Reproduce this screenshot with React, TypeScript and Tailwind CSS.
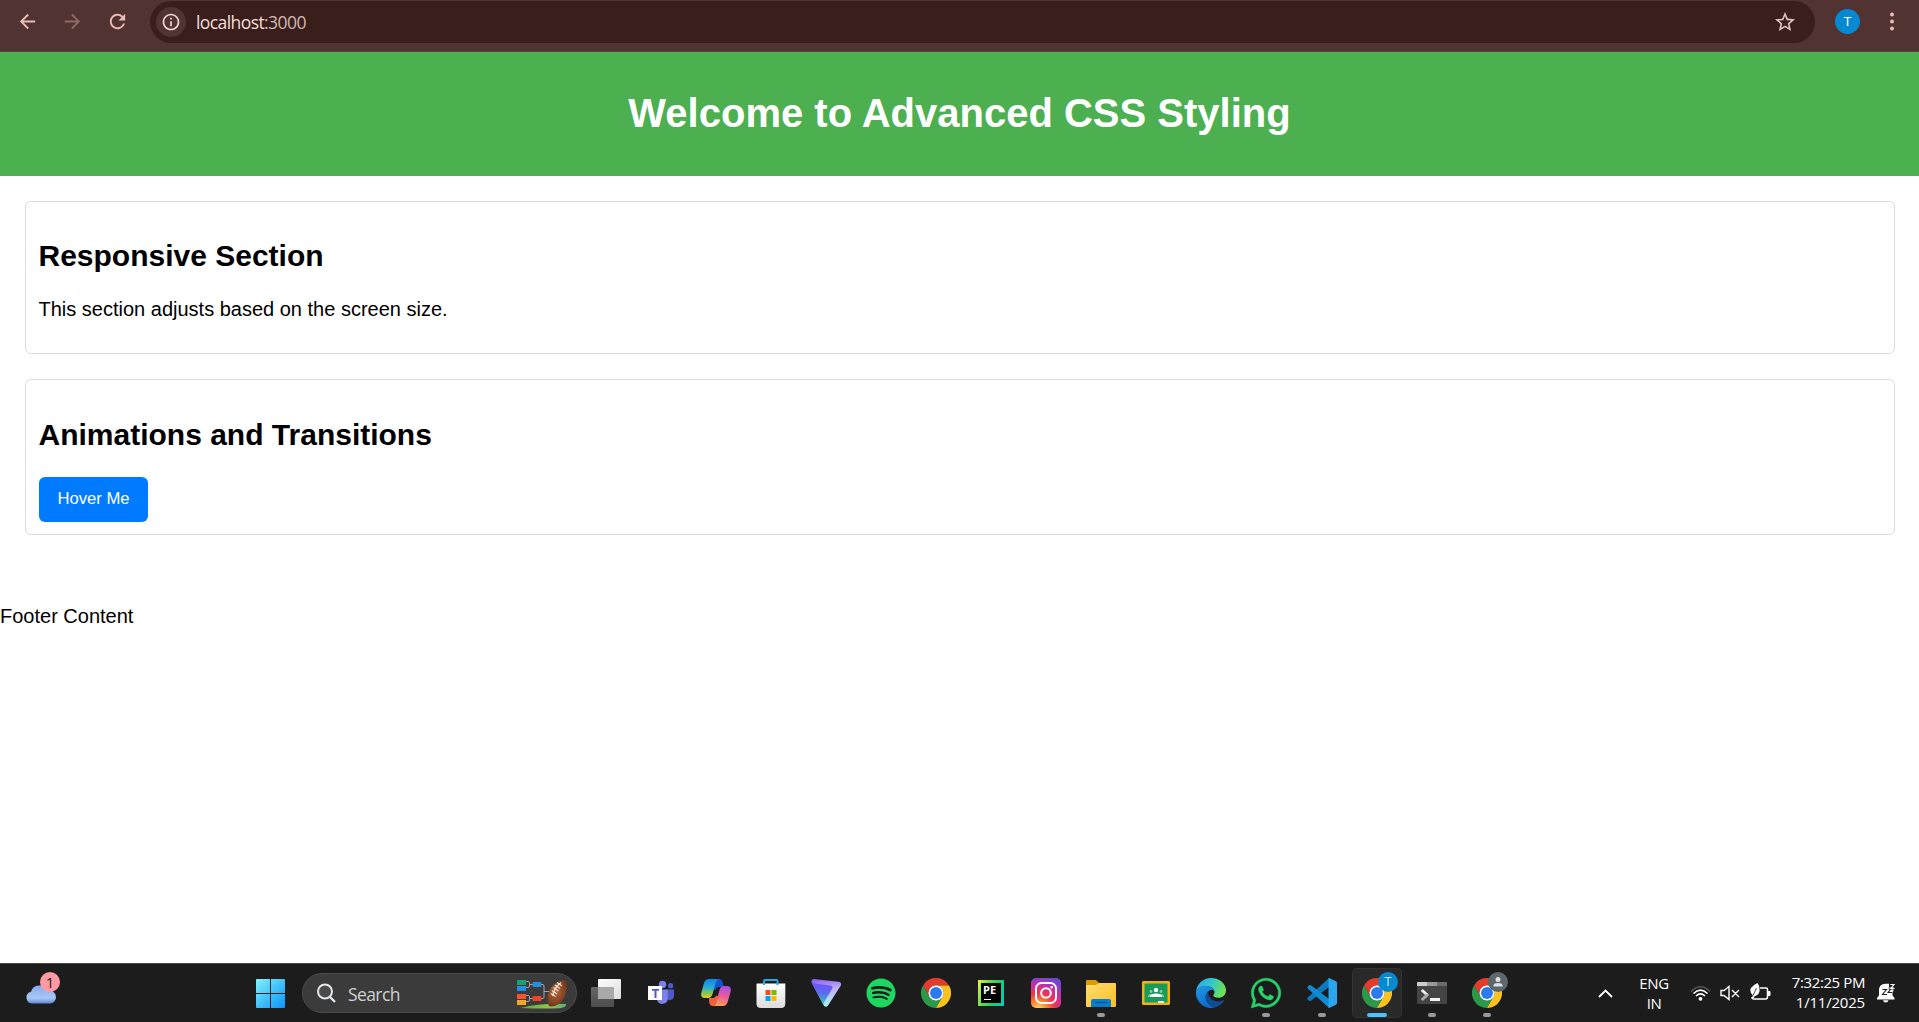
import React from "react";
import { MdArrowBack, MdArrowForward, MdRefresh, MdInfoOutline, MdStarBorder } from "react-icons/md";
import { FaSpotify, FaWhatsapp } from "react-icons/fa6";

function ChromeLogo() {
  return (
    <svg width="30" height="30" viewBox="0 0 48 48">
      <circle cx="24" cy="24" r="12" fill="#fff" />
      <path d="M3.2 12A24 24 0 0 1 44.8 12H24A12 12 0 0 0 13.6 30Z" fill="#e33b2e" />
      <path d="M3.2 12L13.6 30A12 12 0 0 0 34.4 30L24 48A24 24 0 0 1 3.2 12Z" fill="#2a9a48" />
      <path d="M44.8 12H24A12 12 0 0 1 34.4 30L24 48A24 24 0 0 0 44.8 12Z" fill="#fcc31e" />
      <circle cx="24" cy="24" r="12" fill="#fff" />
      <circle cx="24" cy="24" r="9.6" fill="#2b7bef" />
    </svg>
  );
}

function WeatherIcon() {
  return (
    <svg width="31" height="20" viewBox="0 0 31 20">
      <defs>
        <linearGradient id="cloud" x1="0" y1="0" x2="0" y2="1">
          <stop offset="0" stopColor="#88a9ee" />
          <stop offset="0.7" stopColor="#a9c8f8" />
          <stop offset="1" stopColor="#5f86d3" />
        </linearGradient>
      </defs>
      <path d="M6 19.5A6 6 0 0 1 5 7.7A8.5 8.5 0 0 1 21 6.5A7 7 0 0 1 30 13A6.3 6.3 0 0 1 24 19.5Z" fill="url(#cloud)" />
      <path d="M7 8.3C11 7 14 8.5 16 11C18 8 20 7 23 7.2" fill="none" stroke="#9cbaf3" strokeWidth="1.4" />
    </svg>
  );
}

function WindowsLogo() {
  return (
    <svg width="29" height="29" viewBox="0 0 29 29">
      <defs>
        <linearGradient id="win" gradientUnits="userSpaceOnUse" x1="0" y1="0" x2="29" y2="29">
          <stop offset="0" stopColor="#82f3ff" />
          <stop offset="0.5" stopColor="#43c3f9" />
          <stop offset="1" stopColor="#0a93fb" />
        </linearGradient>
      </defs>
      <path d="M1 0H14V14H0V1Q0 0 1 0ZM15 0H28Q29 0 29 1V14H15ZM0 15H14V29H1Q0 29 0 28ZM15 15H29V28Q29 29 28 29H15Z" fill="url(#win)" />
    </svg>
  );
}

function FootballArt() {
  return (
    <svg width="50" height="30" viewBox="0 0 50 30">
      <defs>
        <radialGradient id="ball" cx="0.4" cy="0.4" r="0.65">
          <stop offset="0" stopColor="#b66c3b" />
          <stop offset="1" stopColor="#6d3419" />
        </radialGradient>
        <linearGradient id="grass" x1="0" x2="1">
          <stop offset="0" stopColor="#57a33c" />
          <stop offset="0.6" stopColor="#8fc747" />
          <stop offset="1" stopColor="#5cb176" />
        </linearGradient>
      </defs>
      <path d="M3 29Q24 24 49 25Q50 28 43 29.3Q24 30 3 29Z" fill="url(#grass)" />
      <g fill="none" stroke="#a79fa9" strokeWidth="1">
        <path d="M9 2.5H11.5Q12.5 2.5 12.5 4V7Q12.5 8.5 11 8.5H9M12.5 5.5H16" />
        <path d="M9 16.5H11.5Q12.5 16.5 12.5 18V21Q12.5 22.5 11 22.5H9M12.5 19.5H16" />
        <path d="M24 5.5H26Q27 5.5 27 7V18Q27 19.5 26 19.5H24M27 12.5H32" />
      </g>
      <rect y="1" width="9" height="5" fill="#17a371" />
      <rect y="7" width="9" height="5" fill="#228fe2" />
      <rect y="15" width="9" height="5" fill="#f4552e" />
      <rect y="21" width="9" height="5" fill="#f0a824" />
      <rect x="15.5" y="3" width="9" height="5" rx="1" fill="#228fe2" />
      <rect x="15.5" y="17" width="9" height="5" rx="1" fill="#f04427" />
      <path d="M48.5 1.5C52 8 49 20 42 25C38 27.5 33.5 28 32 27C29 22 30 12 37 5.5C41 2 46 .5 48.5 1.5Z" fill="url(#ball)" />
      <path d="M44 3.5Q37 9 35.5 17" fill="none" stroke="#f3e5dc" strokeWidth="1.2" />
      <path d="M40 3.5L45 7M38 6L43 9.5M36.5 8.5L41.5 12M35 11.5L40 15M33.8 14.5L38.5 17.5" stroke="#f3e5dc" strokeWidth="1.1" />
    </svg>
  );
}

function TaskView() {
  return (
    <svg width="30" height="30" viewBox="0 0 30 30">
      <defs>
        <linearGradient id="tv1" x1="0" y1="0" x2="1" y2="1">
          <stop offset="0" stopColor="#fff" />
          <stop offset="1" stopColor="#dcdcdc" />
        </linearGradient>
        <linearGradient id="tv2" x1="0" y1="0" x2="0" y2="1">
          <stop offset="0" stopColor="#666" />
          <stop offset="1" stopColor="#4c4c4c" />
        </linearGradient>
      </defs>
      <rect x="0" y="9" width="23" height="20" rx="1" fill="url(#tv2)" />
      <rect x="7" y="1" width="23" height="20" rx="1" fill="url(#tv1)" />
      <path d="M7 9H22Q23 9 23 10V21H8Q7 21 7 20Z" fill="#a9a9a9" />
    </svg>
  );
}

function Teams() {
  return (
    <svg width="30" height="30" viewBox="0 0 30 30">
      <circle cx="16.5" cy="6.5" r="3.7" fill="#7b83eb" />
      <circle cx="24.6" cy="7.7" r="2.6" fill="#5059c9" />
      <path d="M20 11.5H28V18.5A4.5 4.5 0 0 1 20 20.5Z" fill="#5059c9" />
      <path d="M11 11.5H21.7V20.5A5.4 5.4 0 0 1 11 21.5Z" fill="#7b83eb" />
      <rect x="2" y="8" width="14" height="14" fill="#fff" />
      <path d="M6 11H13V12.7H10.5V20H8.5V12.7H6Z" fill="#5059c9" />
    </svg>
  );
}

function Copilot() {
  return (
    <svg width="30" height="30" viewBox="0 0 30 30">
      <defs>
        <linearGradient id="cp1" x1="0" y1="0" x2="0" y2="1">
          <stop offset="0" stopColor="#0d86e8" />
          <stop offset="0.4" stopColor="#23a9da" />
          <stop offset="0.7" stopColor="#6fc665" />
          <stop offset="1" stopColor="#eccb19" />
        </linearGradient>
        <linearGradient id="cp2" x1="0.6" y1="0" x2="0.4" y2="1">
          <stop offset="0" stopColor="#a94de8" />
          <stop offset="0.5" stopColor="#ec5c9b" />
          <stop offset="1" stopColor="#ff9e52" />
        </linearGradient>
      </defs>
      <path d="M14 1H18.5Q20.5 1 21.5 4L23 9H18Q15.5 9 14.5 12L11 10Z" fill="#1553ce" />
      <path d="M8 20H12Q14 20 15 17.5L17.5 19L14.5 26Q13.7 28 12 28H11Q9 28 8.3 25Z" fill="#f4603c" />
      <path d="M8 1H18Q16 1 15 4L11.5 16Q10.3 20 7 20H4Q-1 20 .5 14L3 5Q4.3 1 8 1Z" fill="url(#cp1)" />
      <path d="M23 8H26Q31 8 29.5 14L27 23Q25.7 28 22 28H12Q14 28 15 25L18.5 12Q19.6 8 23 8Z" fill="url(#cp2)" />
    </svg>
  );
}

function Store() {
  return (
    <svg width="30" height="30" viewBox="0 0 30 30">
      <defs>
        <linearGradient id="st" x1="0" y1="0" x2="0" y2="1">
          <stop offset="0" stopColor="#fff" />
          <stop offset="1" stopColor="#dcdcdc" />
        </linearGradient>
      </defs>
      <path d="M1 5.5H29.3V25.500Q29.3 30 25 30H5Q.5 30 .5 25.500V6Z" fill="url(#st)" />
      <path d="M8 7V3Q8 2 9 2H20.500Q21.500 2 21.500 3V7" fill="none" stroke="#25a7e3" strokeWidth="2" />
      <rect x="9.5" y="12" width="5" height="5" fill="#f25022" />
      <rect x="15.5" y="12" width="5" height="5" fill="#7fba00" />
      <rect x="9.5" y="18" width="5" height="5" fill="#00a4ef" />
      <rect x="15.5" y="18" width="5" height="5" fill="#ffb900" />
    </svg>
  );
}

function ProtonVpn() {
  return (
    <svg width="30" height="30" viewBox="0 0 30 30">
      <defs>
        <linearGradient id="pv1" x1="0.6" y1="0" x2="0.5" y2="1">
          <stop offset="0" stopColor="#7450fa" />
          <stop offset="0.5" stopColor="#5b6bf0" />
          <stop offset="1" stopColor="#27dcae" />
        </linearGradient>
        <linearGradient id="pv2" x1="0.4" y1="0" x2="0.6" y2="1">
          <stop offset="0" stopColor="#8d67fb" />
          <stop offset="0.4" stopColor="#c1adf8" />
          <stop offset="1" stopColor="#a8f7ef" />
        </linearGradient>
      </defs>
      <path d="M2.5 1L27.5 3.8Q31.3 4.5 29.5 8L17 27.5Q15 30 12.8 27.5L1 5Q-.5 1.5 2.5 1Z" fill="url(#pv2)" />
      <path d="M1 3Q2 5.5 5 5.8L19.500 7.5Q22.500 8.300 21 11L12.800 24.500Q12 26.500 12.800 27.700L.7 5Q.2 4 1 3Z" fill="url(#pv1)" />
    </svg>
  );
}

function PyCharmEdu() {
  return (
    <div className="flex h-[26px] w-[26px] items-center justify-center bg-[linear-gradient(110deg,#e9f542_0%,#5fdc48_35%,#16cf6d_65%,#13c3c9_100%)]">
      <div className="relative h-[20px] w-[20px] bg-black">
        <span className="absolute top-[2px] left-[2px] font-['Open_Sans',sans-serif] text-[11px] leading-[10px] font-bold text-white">PE</span>
        <span className="absolute bottom-[3px] left-[3px] h-px w-[7px] bg-white" />
      </div>
    </div>
  );
}

function Instagram() {
  return (
    <svg width="30" height="30" viewBox="0 0 30 30">
      <defs>
        <radialGradient id="ig" cx="0.25" cy="1.05" r="1.1">
          <stop offset="0" stopColor="#ffdc70" />
          <stop offset="0.25" stopColor="#fb8b32" />
          <stop offset="0.5" stopColor="#ee3550" />
          <stop offset="0.75" stopColor="#c72fa4" />
          <stop offset="1" stopColor="#7147cf" />
        </radialGradient>
      </defs>
      <rect width="30" height="30" rx="5" fill="url(#ig)" />
      <rect x="5" y="5" width="20" height="20" rx="5.5" fill="none" stroke="#fff" strokeWidth="2" />
      <circle cx="15" cy="15" r="4.8" fill="none" stroke="#fff" strokeWidth="2" />
      <circle cx="20.7" cy="9.3" r="1.3" fill="#fff" />
    </svg>
  );
}

function Explorer() {
  return (
    <svg width="30" height="30" viewBox="0 0 30 30">
      <defs>
        <linearGradient id="fo" x1="0" y1="0" x2="1" y2="1">
          <stop offset="0" stopColor="#ffdf72" />
          <stop offset="1" stopColor="#fbbd21" />
        </linearGradient>
      </defs>
      <path d="M0 3Q0 2 1 2H10L13 5H20V12H0Z" fill="#dd9a04" />
      <path d="M0 7H10L13 5H29Q30 5 30 6V28Q30 29 29 29H1Q0 29 0 28Z" fill="url(#fo)" />
      <path d="M5 29V23Q5 21 7 21H23Q25 21 25 23V29Z" fill="#087ccc" />
      <path d="M8.5 24.5H21.5" stroke="#034f91" strokeWidth="1" />
    </svg>
  );
}

function Classroom() {
  return (
    <svg width="30" height="30" viewBox="0 0 30 30">
      <rect x="1" y="3" width="28" height="24" rx="1.5" fill="#f1b30c" />
      <rect x="3.5" y="5.5" width="23" height="19" fill="#189a58" />
      <circle cx="15" cy="12" r="2.2" fill="#fff" />
      <circle cx="10" cy="13.5" r="1.4" fill="#8bcba8" />
      <circle cx="20" cy="13.5" r="1.4" fill="#8bcba8" />
      <path d="M6.8 19Q7 16 10 16H20Q23 16 23.2 19Z" fill="#8bcba8" />
      <path d="M9 19Q9.500 15.700 15 15.500Q20.500 15.700 21 19Z" fill="#fff" />
      <rect x="17" y="23" width="6" height="1.8" fill="#fff" />
    </svg>
  );
}

function Edge() {
  return (
    <svg width="30" height="30" viewBox="0 0 30 30">
      <defs>
        <linearGradient id="ed1" x1="0" y1="0.2" x2="1" y2="0.5">
          <stop offset="0" stopColor="#2ea5e6" />
          <stop offset="0.5" stopColor="#32c9c9" />
          <stop offset="1" stopColor="#72e24c" />
        </linearGradient>
        <linearGradient id="ed2" x1="0.2" y1="0" x2="0.6" y2="1">
          <stop offset="0" stopColor="#2196e0" />
          <stop offset="1" stopColor="#0b66d0" />
        </linearGradient>
      </defs>
      <path d="M0 14A15 15 0 0 1 15 0C24 0 30 6 30 12.5C30 17 26.5 19.8 22.5 19.8C19 19.8 17.3 18.7 17.3 17.6C17.3 16.8 18.5 16.3 18.5 14C18.5 11 15 8 10 8C5 8 1 10.5 0 14Z" fill="url(#ed1)" />
      <path d="M0 14C1 10 5 7.8 9.5 7.8C15 7.8 18.5 11 18.5 14C18 12 15.5 11.5 13.5 12.5C9 15 8.5 21 12.5 25.5C14.5 28 17 29.5 19.5 29.3A15 15 0 0 1 0 14Z" fill="url(#ed2)" />
      <path d="M12.2 13.4C8.5 16 8.7 21 12.5 25.5C14.5 28.2 17 29.5 19.5 29.3C23.5 28 26.5 25.5 28 22.8C28.2 22 27.7 21.8 27 22.2C23 24.3 17.5 23.7 14.2 20C12.3 17.7 12 15.5 12.2 13.4Z" fill="#0e4c94" />
    </svg>
  );
}

function VsCode() {
  return (
    <svg width="30" height="30" viewBox="0 0 30 30">
      <path d="M22 0L.8 19.5Q-.2 20.5 .8 21.5L2.3 22.8Q3 23.3 4 22.8L22 9Z" fill="#0b79bd" />
      <path d="M22 30L.8 10.5Q-.2 9.5 .8 8.5L2.3 7.2Q3 6.7 4 7.2L22 21Z" fill="#108bd3" />
      <path d="M22 0L29 3.3Q30 3.8 30 5V25Q30 26.2 29 26.7L22 30Q20.5 29 21.5 28V2Q20.5 1 22 0Z" fill="#2aa5f0" />
    </svg>
  );
}

function Terminal() {
  return (
    <svg width="30" height="30" viewBox="0 0 30 30">
      <path d="M0 5Q0 4 1 4H29Q30 4 30 5V25Q30 26 29 26H1Q0 26 0 25Z" fill="#444" />
      <path d="M0 5Q0 4 1 4H10V8H0Z" fill="#ccc" />
      <path d="M10 4H20V8H10Z" fill="#999" />
      <path d="M20 4H29Q30 4 30 5V8H20Z" fill="#6b6b6b" />
      <path d="M4.8 12L10.8 17.5" stroke="#eee" strokeWidth="3" />
      <path d="M10.8 16.3L4.8 22" stroke="#aaa" strokeWidth="3" />
      <path d="M13 21.5H23" stroke="#f2f2f2" strokeWidth="3" />
    </svg>
  );
}

function ProfileT() {
  return (
    <span className="absolute top-[4px] left-[26px] flex h-5 w-5 items-center justify-center rounded-full bg-[#0789d0] font-['Liberation_Sans',sans-serif] text-[12px] leading-none text-[#c9e2f2]">
      T
    </span>
  );
}

function ProfileGuest() {
  return (
    <span className="absolute top-[4px] left-[26px] flex h-5 w-5 items-center justify-center rounded-full bg-[#5c686d]">
      <svg width="10" height="10" viewBox="0 0 10 10" fill="#dcdfe0">
        <circle cx="5" cy="2.5" r="2.5" />
        <path d="M.5 9.5V8Q1 6 5 6Q9 6 9.5 8V9.5Z" />
      </svg>
    </span>
  );
}

type TaskbarApp = { name: string; icon: React.ReactNode; open?: boolean; active?: boolean; badge?: React.ReactNode };

const pinned: TaskbarApp[] = [
  { name: "Task view", icon: <TaskView /> },
  { name: "Teams", icon: <Teams /> },
  { name: "Copilot", icon: <Copilot /> },
  { name: "Store", icon: <Store /> },
  { name: "Proton VPN", icon: <ProtonVpn /> },
  { name: "Spotify", icon: <FaSpotify size={30} color="#1ed760" /> },
  { name: "Chrome", icon: <ChromeLogo /> },
  { name: "PyCharm Edu", icon: <PyCharmEdu /> },
  { name: "Instagram", icon: <Instagram /> },
  { name: "File Explorer", icon: <Explorer />, open: true },
  { name: "Classroom", icon: <Classroom /> },
  { name: "Edge", icon: <Edge /> },
  { name: "WhatsApp", icon: <FaWhatsapp size={34} color="#25d366" stroke="#25d366" strokeWidth={6} />, open: true },
];

const running: TaskbarApp[] = [
  { name: "VS Code", icon: <VsCode />, open: true },
  { name: "Chrome profile T", icon: <ChromeLogo />, active: true, badge: <ProfileT /> },
  { name: "Terminal", icon: <Terminal />, open: true },
  { name: "Chrome guest", icon: <ChromeLogo />, open: true, badge: <ProfileGuest /> },
];

function AppButton({ app }: { app: TaskbarApp }) {
  return (
    <div
      className={
        app.active
          ? "relative flex h-[50px] w-[50px] shrink-0 items-center justify-center rounded-[5px] bg-[#292929] ring-1 ring-[#333] ring-inset"
          : "relative flex h-[50px] w-[50px] shrink-0 items-center justify-center"
      }
    >
      {app.icon}
      {app.badge}
      {app.active && <span className="absolute bottom-[1px] left-[15px] h-[4px] w-[20px] rounded-full bg-[#4cc2ff]" />}
      {app.open && <span className="absolute bottom-[1px] left-[21px] h-[4px] w-[8px] rounded-full bg-[#9a9a9a]" />}
    </div>
  );
}

function BrowserBar() {
  return (
    <div className="flex h-[52px] shrink-0 items-start border-b border-[#5c3f3b] bg-[#513331]">
      <div className="flex h-[43px] w-[150px] items-center pl-4 text-[#e9bcb6]">
        <MdArrowBack size={23} />
        <MdArrowForward size={23} className="ml-[22px] text-[#8d6a66]" />
        <MdRefresh size={23} className="ml-[22px]" />
      </div>
      <div className="mt-px flex h-[42px] w-[1665px] items-center rounded-full bg-[#3a1e1b] pl-[6px] font-['Open_Sans',sans-serif] text-[17.5px]">
        <span className="flex h-[30px] w-[30px] items-center justify-center rounded-full bg-[#513331]">
          <MdInfoOutline size={20} color="#f1d7d2" />
        </span>
        <span className="ml-[10px] pt-px tracking-[-0.58px] text-[#f3dfdc]">
          localhost<span className="text-[#cfb8b4]">:3000</span>
        </span>
        <MdStarBorder size={24} color="#dbc5c1" className="mr-[18px] ml-auto" />
      </div>
      <div className="ml-5 flex h-[43px] items-center">
        <span className="flex h-[25px] w-[25px] items-center justify-center rounded-full bg-[#0489d3] font-['Liberation_Sans',sans-serif] text-[13px] leading-none text-white">
          T
        </span>
        <svg className="ml-[30px]" width="4" height="19" viewBox="0 0 4 19" fill="#e9bcb6">
          <circle cx="2" cy="2.5" r="2" />
          <circle cx="2" cy="9.5" r="2" />
          <circle cx="2" cy="16.5" r="2" />
        </svg>
      </div>
    </div>
  );
}

function Taskbar() {
  return (
    <div className="flex h-[59px] shrink-0 border-t border-[#454545] bg-[#1c1c1c] font-['Open_Sans',sans-serif] text-white">
      <div className="w-[256px] shrink-0 pt-[20px] pl-[26px]">
        <div className="relative w-[31px]">
          <WeatherIcon />
          <span className="absolute -top-[12px] left-[14px] flex h-5 w-5 items-center justify-center rounded-full bg-[#ff99a4] text-[15px] leading-none text-[#1c1c1c]">1</span>
        </div>
      </div>
      <div className="w-[46px] shrink-0 pt-[15px]">
        <WindowsLogo />
      </div>
      <div className="mt-[9px] flex h-[40px] w-[275px] shrink-0 items-center rounded-full border border-[#4b4b4b] bg-[#3b3b3b] pr-[9px] pl-[14px]">
        <svg width="19" height="20" viewBox="0 0 19 20" fill="none" stroke="#e3e6ea" strokeWidth="2">
          <circle cx="8" cy="8.5" r="7" fill="#4a4a4a" />
          <path d="M13 14L18 19" strokeWidth="2.4" />
        </svg>
        <span className="ml-[12px] pt-[2px] text-[17.5px] tracking-[-0.6px] text-[#d0d0d0]">Search</span>
        <span className="mt-[2px] ml-auto">
          <FootballArt />
        </span>
      </div>
      <div className="ml-[4px] flex gap-[6px] pt-[4px]">
        <div className="flex gap-[5px]">
          {pinned.map((a) => (
            <AppButton key={a.name} app={a} />
          ))}
        </div>
        <div className="flex gap-[5px]">
          {running.map((a) => (
            <AppButton key={a.name} app={a} />
          ))}
        </div>
      </div>
      <div className="mr-[24px] ml-auto flex h-[58px] items-center">
        <svg width="15" height="9" viewBox="0 0 15 9" fill="none" stroke="#fff" strokeWidth="1.8">
          <path d="M1 8L7.5 1.5L14 8" />
        </svg>
        <div className="ml-[24px] w-[34px] pb-px text-center text-[15px] leading-[20px] tracking-[-0.4px]">
          <div>ENG</div>
          <div>IN</div>
        </div>
        <svg className="ml-[19px]" width="21" height="17" viewBox="0 0 21 17" fill="none" stroke="#fff" strokeWidth="1.5">
          <path d="M1 6.5Q10.5 -3 20 6.5" stroke="#555" />
          <path d="M3.5 8.5Q10.5 1.7 17.5 8.5M6 11Q10.5 6.7 15 11" />
          <circle cx="10.5" cy="13.8" r="1.9" fill="#fff" stroke="none" />
        </svg>
        <svg className="ml-[9px]" width="20" height="16" viewBox="0 0 20 16" fill="none" stroke="#fff" strokeWidth="1.4">
          <path d="M1 5.5H4L9 1.5V14.5L4 10.5H1ZM12 5L19 12M19 5L12 12" />
        </svg>
        <svg className="-mt-[3px] ml-[10px]" width="21" height="18" viewBox="0 0 21 18">
          <path d="M10 5H16Q17.5 5 17.5 6.5V14Q17.5 16 15.5 16H4Q2 16 2 14" fill="none" stroke="#fff" strokeWidth="1.5" />
          <path d="M18 8H19.5Q20.5 8 20.5 9V12Q20.5 13 19.5 13H18Z" fill="#fff" />
          <path d="M7.5 0Q10 3 9.5 8Q9 12 5 13L2.5 16L1.5 15.5L3 12.5Q-1 9 1 5Q3 2 7.5 0Z" fill="#fff" />
          <path d="M3 12.5L6.5 5" stroke="#1c1c1c" strokeWidth="0.8" />
        </svg>
        <div className="mr-px ml-[17px] w-[77px] pb-[3px] text-right text-[15px] leading-[20px] tracking-[-0.4px] whitespace-nowrap">
          <div>7:32:25 PM</div>
          <div className="tracking-[-0.2px]">1/11/2025</div>
        </div>
        <svg className="ml-[11px]" width="18" height="20" viewBox="0 0 18 20" fill="#fff">
          <path d="M0 16.5V15L2 12.5V7.5Q2 1 8.5 .8H12V4H16.5V8L15.5 9V12.5L17.5 15V16.5ZM6 17.3H11.5Q11 19.5 8.7 19.5Q6.5 19.5 6 17.3Z" />
          <path d="M5.5 6.5H9.5L5.5 11.5H10M11.5 5H14.5L11 9.5H15M12 2H17L13 6H17.5" fill="none" stroke="#1c1c1c" strokeWidth="1.1" />
          <path d="M13.3 1.5H17L13.8 5.5H17.5" fill="none" stroke="#fff" strokeWidth="1.2" />
        </svg>
      </div>
    </div>
  );
}

export default function App() {
  return (
    <div className="flex h-[1022px] w-[1919px] flex-col overflow-hidden bg-white">
      <BrowserBar />
      <div className="flex-1 font-['Liberation_Sans',Arial,sans-serif] text-black">
        <header className="h-[124px] bg-[#4caf50] pt-[38px] text-center">
          <h1 className="text-[40px] leading-[46px] font-bold text-white">Welcome to Advanced CSS Styling</h1>
        </header>
        <section className="mt-[25px] mr-[24px] ml-[25px] h-[153px] rounded-[6px] border border-[#ddd] px-[12.5px] pt-[37px]">
          <h2 className="text-[30px] leading-[34px] font-bold">Responsive Section</h2>
          <p className="mt-[25px] text-[20px] leading-[23px]">This section adjusts based on the screen size.</p>
        </section>
        <section className="mt-[25px] mr-[24px] ml-[25px] h-[156px] rounded-[6px] border border-[#ddd] px-[12.5px] pt-[38px]">
          <h2 className="text-[30px] leading-[34px] font-bold">Animations and Transitions</h2>
          <button className="mt-[25px] ml-[0.5px] block h-[45px] w-[109px] rounded-[6px] bg-[#007bff] pb-[3px] text-[16.67px] text-white">Hover Me</button>
        </section>
        <footer className="mt-[70px] text-[20px] leading-[23px]">Footer Content</footer>
      </div>
      <Taskbar />
    </div>
  );
}
